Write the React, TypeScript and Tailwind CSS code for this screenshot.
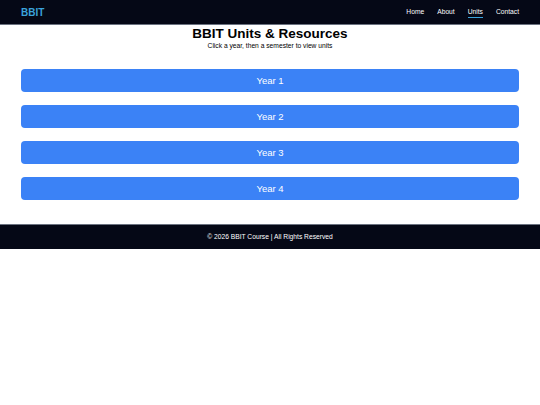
const years = ["Year 1", "Year 2", "Year 3", "Year 4"];

export default function App() {
  return (
    <div className="min-h-[405px] bg-white font-['Liberation_Sans',Arial,sans-serif]">
      <nav className="flex h-[25px] items-center justify-between border-b border-[#6b7280] bg-[#050816] pl-[21px] pr-[21px]">
        <span className="text-[10px] font-bold text-[#3ba3dc]">BBIT</span>
        <ul className="flex items-center gap-[13px] text-[6.7px] text-white">
          <li>Home</li>
          <li>About</li>
          <li className="relative">
            Units
            <span className="absolute left-0 right-0 top-[10px] h-[1px] bg-[#3ba3dc]" />
          </li>
          <li>Contact</li>
        </ul>
      </nav>

      <main className="px-[21px] pb-[24px]">
        <div className="text-center leading-none">
          <h1 className="pt-[2px] text-[13.5px] font-bold text-black">BBIT Units &amp; Resources</h1>
          <p className="mt-[2px] text-[6.7px] text-black">Click a year, then a semester to view units</p>
        </div>

        <div className="mt-[20px] flex flex-col gap-[13px]">
          {years.map((y) => (
            <button
              key={y}
              className="h-[23px] w-full rounded-[4px] bg-[#3b82f6] text-[9.5px] text-white"
            >
              {y}
            </button>
          ))}
        </div>
      </main>

      <footer className="flex h-[25px] items-center justify-center border-t border-[#6b7280] bg-[#050816] text-[6.7px] text-white">
        © 2026 BBIT Course | All Rights Reserved
      </footer>
    </div>
  );
}
